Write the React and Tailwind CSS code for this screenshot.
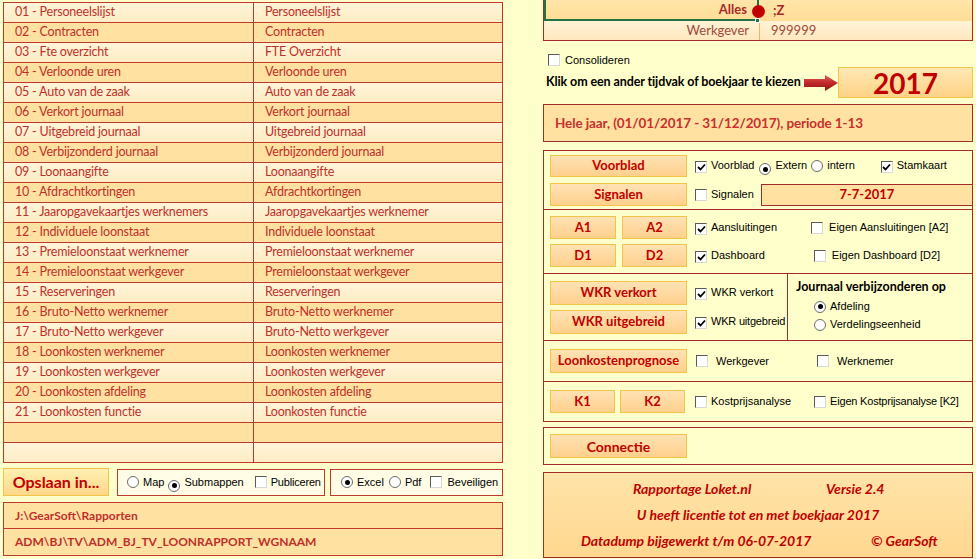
import React from "react";

const rows = [
  ["01 - Personeelslijst", "Personeelslijst"],
  ["02 - Contracten", "Contracten"],
  ["03 - Fte overzicht", "FTE Overzicht"],
  ["04 - Verloonde uren", "Verloonde uren"],
  ["05 - Auto van de zaak", "Auto van de zaak"],
  ["06 - Verkort journaal", "Verkort journaal"],
  ["07 - Uitgebreid journaal", "Uitgebreid journaal"],
  ["08 - Verbijzonderd journaal", "Verbijzonderd journaal"],
  ["09 - Loonaangifte", "Loonaangifte"],
  ["10 - Afdrachtkortingen", "Afdrachtkortingen"],
  ["11 - Jaaropgavekaartjes werknemers", "Jaaropgavekaartjes werknemer"],
  ["12 - Individuele loonstaat", "Individuele loonstaat"],
  ["13 - Premieloonstaat werknemer", "Premieloonstaat werknemer"],
  ["14 - Premieloonstaat werkgever", "Premieloonstaat werkgever"],
  ["15 - Reserveringen", "Reserveringen"],
  ["16 - Bruto-Netto werknemer", "Bruto-Netto werknemer"],
  ["17 - Bruto-Netto werkgever", "Bruto-Netto werkgever"],
  ["18 - Loonkosten werknemer", "Loonkosten werknemer"],
  ["19 - Loonkosten werkgever", "Loonkosten werkgever"],
  ["20 - Loonkosten afdeling", "Loonkosten afdeling"],
  ["21 - Loonkosten functie", "Loonkosten functie"],
  ["", ""],
  ["", ""],
];

// windows-classic checkbox
const Check = ({ checked }) => (
  <span className="inline-flex w-[12px] h-[12px] shrink-0 bg-white border border-t-[#5a5a5a] border-l-[#5a5a5a] border-r-[#d8d8d8] border-b-[#d8d8d8] items-center justify-center">
    {checked && (
      <svg width="9" height="9" viewBox="0 0 9 9">
        <path d="M1 4 L3.5 6.5 L8 1.5" fill="none" stroke="#000" strokeWidth="1.8" />
      </svg>
    )}
  </span>
);

const Radio = ({ on }) => (
  <span className="inline-flex w-[12px] h-[12px] shrink-0 rounded-full bg-white border border-[#6b6b6b] items-center justify-center">
    {on && <span className="w-[5px] h-[5px] rounded-full bg-black" />}
  </span>
);

const Lbl = ({ children, className = "" }) => (
  <span className={"font-['Liberation_Sans',Arial,sans-serif] text-[11px] text-black leading-none whitespace-nowrap " + className}>
    {children}
  </span>
);

const Btn = ({ children, className = "" }) => (
  <div
    className={
      "flex items-center justify-center whitespace-nowrap bg-gradient-to-b from-[#ffe2b4] to-[#ffd08c] border border-[#f3c546] font-['Lato',sans-serif] font-bold text-[13px] text-[#c00000] " +
      className
    }
  >
    {children}
  </div>
);

const Arrow = () => (
  <svg width="34" height="16" viewBox="0 0 34 16">
    <defs>
      <linearGradient id="ar" x1="0" y1="0" x2="0" y2="1">
        <stop offset="0" stopColor="#e25a5a" />
        <stop offset="0.5" stopColor="#c0282a" />
        <stop offset="1" stopColor="#8e1214" />
      </linearGradient>
    </defs>
    <path d="M0 4 H21 V0 L34 8 L21 16 V12 H0 Z" fill="url(#ar)" />
  </svg>
);

export default function App() {
  return (
    <div className="w-[976px] h-[559px] bg-[#ffffcc] flex overflow-hidden font-['Lato',sans-serif]">
      {/* links: rapportenlijst */}
      <div className="w-[500px] ml-[3px] mt-[2px] flex flex-col">
        <table className="w-full border-collapse">
          <tbody>
            {rows.map((r, i) => (
              <tr key={i} className={i % 2 ? "bg-[#ffe2a2]" : "bg-gradient-to-b from-[#fff4d8] to-[#ffecc4]"}>
                <td className="h-[20px] w-[250px] border border-[#c0392b] pl-[11px] text-[12.5px] tracking-[-0.2px] text-[#c0302a] leading-none whitespace-nowrap">{r[0]}</td>
                <td className="h-[20px] border border-[#c0392b] pl-[11px] text-[12.5px] tracking-[-0.2px] text-[#c0302a] leading-none whitespace-nowrap">{r[1]}</td>
              </tr>
            ))}
          </tbody>
        </table>

        <div className="flex items-center mt-[5px] h-[28px]">
          <Btn className="w-[106px] h-[28px] text-[16px] from-[#fff0b0] to-[#ffd78a]">Opslaan in...</Btn>
          <div className="ml-[8px] w-[208px] h-[27px] border border-[#c0392b] bg-[#fffde6] flex items-center pl-[9px]">
            <Radio />
            <Lbl className="ml-[4px]">Map</Lbl>
            <span className="ml-[4px]"><Radio on /></span>
            <Lbl className="ml-[4px]">Submappen</Lbl>
            <span className="ml-[11px]"><Check /></span>
            <Lbl className="ml-[4px] tracking-[-0.2px]">Publiceren</Lbl>
          </div>
          <div className="ml-[5px] flex-1 h-[27px] border border-[#c0392b] bg-[#fffde6] flex items-center pl-[10px]">
            <Radio on />
            <Lbl className="ml-[4px]">Excel</Lbl>
            <span className="ml-[5px]"><Radio /></span>
            <Lbl className="ml-[4px]">Pdf</Lbl>
            <span className="ml-[9px]"><Check /></span>
            <Lbl className="ml-[5px]">Beveiligen</Lbl>
          </div>
        </div>

        <div className="mt-[6px] border border-[#c0392b] bg-[#ffe2a2] font-bold text-[12px] text-[#c0302a]">
          <div className="h-[26px] flex items-center pl-[11px] border-b border-[#c0392b]">J:\GearSoft\Rapporten</div>
          <div className="h-[26px] flex items-center pl-[11px]">ADM\BJ\TV\ADM_BJ_TV_LOONRAPPORT_WGNAAM</div>
        </div>
      </div>

      {/* rechts: instellingen */}
      <div className="w-[430px] ml-[40px] flex flex-col">
        <div className="relative border border-t-0 border-[#a52a2a]">
          <div className="flex h-[21px] bg-gradient-to-b from-[#ffe6a8] to-[#ffdc96]">
            <div className="w-[215px] border-2 border-t-0 border-[#217346] flex items-center justify-end pr-[10px] font-bold text-[13px] text-[#a52a2a]">
              Alles
            </div>
            <div className="flex-1 flex items-center pl-[14px] font-bold text-[13px] text-[#a52a2a]">;Z</div>
          </div>
          <div className="flex h-[19px] bg-gradient-to-b from-[#fff3d6] to-[#ffe8bf]">
            <div className="w-[215px] flex items-center justify-end pr-[10px] text-[13px] text-[#a04a3a]">Werkgever</div>
            <div className="flex-1 border-l border-[#f2b66a] flex items-center pl-[11px] text-[13px] text-[#a04a3a]">999999</div>
          </div>
          <span className="absolute left-[208px] top-[5px] w-[13px] h-[13px] rounded-full bg-[#c00000]" />
          <span className="absolute left-[211px] top-[18px] w-[5px] h-[5px] bg-[#217346] border border-white" />
        </div>

        <div className="mt-[13px] ml-[5px] flex items-center h-[12px]">
          <Check />
          <Lbl className="ml-[5px]">Consolideren</Lbl>
        </div>

        <div className="mt-[1px] flex items-center h-[31px]">
          <span className="ml-[3px] shrink-0 font-bold text-[12.5px] tracking-[-0.1px] text-black whitespace-nowrap">Klik om een ander tijdvak of boekjaar te kiezen</span>
          <span className="ml-[3px] flex shrink-0"><Arrow /></span>
          <div className="ml-auto shrink-0 w-[135px] h-[31px] bg-gradient-to-b from-[#ffe8b4] to-[#ffd386] border border-[#f3c546] flex items-center justify-center font-bold text-[28px] text-[#c00000]">
            2017
          </div>
        </div>

        <div className="mt-[6px] h-[38px] border border-[#a52a2a] bg-[#ffe2a2] flex items-center pl-[11px] font-bold text-[13.5px] tracking-[-0.1px] text-[#c8302c] whitespace-nowrap">
          Hele jaar, (01/01/2017 - 31/12/2017), periode 1-13
        </div>

        <div className="mt-[8px] border border-[#a52a2a] bg-[#ffffcc]">
          {/* Voorblad / Signalen */}
          <div className="h-[59px] flex flex-col justify-center gap-[5px] pl-[6px] border-b border-[#a52a2a]">
            <div className="flex items-center">
              <Btn className="w-[137px] h-[22px]">Voorblad</Btn>
              <span className="ml-[8px]"><Check checked /></span>
              <Lbl className="ml-[4px]">Voorblad</Lbl>
              <span className="ml-[5px]"><Radio on /></span>
              <Lbl className="ml-[4px]">Extern</Lbl>
              <span className="ml-[4px]"><Radio /></span>
              <Lbl className="ml-[4px]">intern</Lbl>
              <span className="ml-[26px]"><Check checked /></span>
              <Lbl className="ml-[4px]">Stamkaart</Lbl>
            </div>
            <div className="flex items-center">
              <Btn className="w-[137px] h-[23px]">Signalen</Btn>
              <span className="ml-[8px]"><Check /></span>
              <Lbl className="ml-[4px]">Signalen</Lbl>
              <div className="ml-[7px] flex-1 h-[22px] bg-[#ffe2a2] border border-[#a52a2a] border-r-0 flex items-center justify-center font-bold text-[13px] text-[#c00000]">
                7-7-2017
              </div>
            </div>
          </div>

          {/* A1 A2 D1 D2 */}
          <div className="h-[64px] flex flex-col justify-center gap-[4px] pl-[6px] border-b border-[#a52a2a]">
            <div className="flex items-center">
              <Btn className="w-[66px] h-[23px]">A1</Btn>
              <Btn className="ml-[6px] w-[65px] h-[23px]">A2</Btn>
              <span className="ml-[8px]"><Check checked /></span>
              <Lbl className="ml-[4px]">Aansluitingen</Lbl>
              <span className="ml-[34px]"><Check /></span>
              <Lbl className="ml-[6px]">Eigen Aansluitingen [A2]</Lbl>
            </div>
            <div className="flex items-center">
              <Btn className="w-[66px] h-[23px]">D1</Btn>
              <Btn className="ml-[6px] w-[65px] h-[23px]">D2</Btn>
              <span className="ml-[8px]"><Check checked /></span>
              <Lbl className="ml-[4px]">Dashboard</Lbl>
              <span className="ml-[49px]"><Check /></span>
              <Lbl className="ml-[6px]">Eigen Dashboard [D2]</Lbl>
            </div>
          </div>

          {/* WKR */}
          <div className="h-[67px] flex border-b border-[#a52a2a]">
            <div className="w-[244px] flex flex-col justify-center gap-[5px] pl-[6px] border-r border-[#a52a2a]">
              <div className="flex items-center">
                <Btn className="w-[137px] h-[24px]">WKR verkort</Btn>
                <span className="ml-[8px]"><Check checked /></span>
                <Lbl className="ml-[4px]">WKR verkort</Lbl>
              </div>
              <div className="flex items-center">
                <Btn className="w-[137px] h-[24px]">WKR uitgebreid</Btn>
                <span className="ml-[8px]"><Check checked /></span>
                <Lbl className="ml-[4px] tracking-[-0.2px]">WKR uitgebreid</Lbl>
              </div>
            </div>
            <div className="flex-1 pl-[8px] pt-[7px]">
              <div className="font-bold text-[12.5px] text-black leading-none whitespace-nowrap">Journaal verbijzonderen op</div>
              <div className="mt-[7px] ml-[18px] flex items-center">
                <Radio on />
                <Lbl className="ml-[4px]">Afdeling</Lbl>
              </div>
              <div className="mt-[6px] ml-[18px] flex items-center">
                <Radio />
                <Lbl className="ml-[4px]">Verdelingseenheid</Lbl>
              </div>
            </div>
          </div>

          {/* Loonkostenprognose */}
          <div className="h-[41px] flex items-center pl-[6px] border-b border-[#a52a2a]">
            <Btn className="w-[137px] h-[24px]">Loonkostenprognose</Btn>
            <span className="ml-[9px]"><Check /></span>
            <Lbl className="ml-[8px]">Werkgever</Lbl>
            <span className="ml-[48px]"><Check /></span>
            <Lbl className="ml-[8px]">Werknemer</Lbl>
          </div>

          {/* K1 K2 */}
          <div className="h-[39px] flex items-center pl-[6px]">
            <Btn className="w-[65px] h-[23px]">K1</Btn>
            <Btn className="ml-[5px] w-[65px] h-[23px]">K2</Btn>
            <span className="ml-[10px]"><Check /></span>
            <Lbl className="ml-[4px]">Kostprijsanalyse</Lbl>
            <span className="ml-[23px]"><Check /></span>
            <Lbl className="ml-[4px] tracking-[-0.2px]">Eigen Kostprijsanalyse [K2]</Lbl>
          </div>
        </div>

        <div className="mt-[5px] h-[38px] border border-[#a52a2a] flex items-center pl-[6px]">
          <Btn className="w-[137px] h-[24px] text-[14px]">Connectie</Btn>
        </div>

        <div className="mt-[7px] h-[86px] border border-[#a52a2a] bg-gradient-to-b from-[#ffe3a8] to-[#ffd890] flex flex-col justify-center gap-[12px] italic font-bold text-[14px] text-[#c00000] leading-none">
          <div className="flex pl-[89px]">
            <span className="w-[193px]">Rapportage Loket.nl</span>
            <span>Versie 2.4</span>
          </div>
          <div className="text-center">U heeft licentie tot en met boekjaar 2017</div>
          <div className="flex pl-[37px]">
            <span className="w-[290px]">Datadump bijgewerkt t/m 06-07-2017</span>
            <span>© GearSoft</span>
          </div>
        </div>
      </div>
    </div>
  );
}
